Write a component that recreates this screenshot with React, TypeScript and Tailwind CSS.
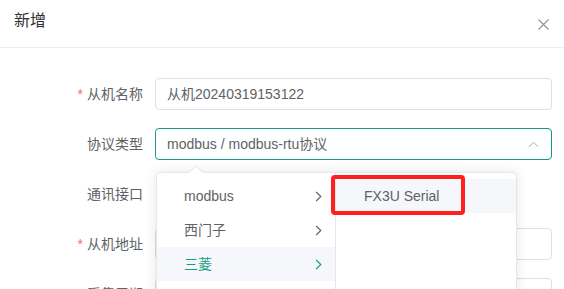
import React from "react";

function ChevronRight({ color }: { color: string }) {
  return (
    <svg width="7" height="11" viewBox="0 0 7 11" fill="none">
      <path d="M1.2 1 L5.8 5.5 L1.2 10" stroke={color} strokeWidth="1.1" />
    </svg>
  );
}

export default function App() {
  return (
    <div className="w-[564px] h-[289px] overflow-hidden bg-white font-['Liberation_Sans','Noto_Sans_CJK_SC',sans-serif]">
      <div className="h-[48px] border-b border-[#ebeef5] flex items-start justify-between pl-[14px] pr-[15px]">
        <div className="pt-[11px] text-[16px] leading-[20px] text-[#303133]">新增</div>
        <svg className="mt-[19px]" width="11" height="11" viewBox="0 0 11 11" fill="none">
          <path d="M0.5 0.5 L10.5 10.5 M10.5 0.5 L0.5 10.5" stroke="#909399" strokeWidth="1.1" />
        </svg>
      </div>
      <div className="pt-[30px]">
        <div className="flex items-center h-[32px] mb-[18px]">
          <div className="w-[155px] pr-[12px] text-right text-[14px] text-[#606266]">
            <span className="text-[#f56c6c] mr-[4px]">*</span>从机名称
          </div>
          <div className="w-[397px] h-[32px] border border-[#dcdfe6] rounded-[4px] px-[11px] flex items-center text-[14px] text-[#606266]">
            从机20240319153122
          </div>
        </div>
        <div className="flex items-center h-[32px] mb-[18px]">
          <div className="w-[155px] pr-[12px] text-right text-[14px] text-[#606266]">协议类型</div>
          <div className="relative w-[397px] h-[32px] border border-[#129c87] rounded-[4px] pl-[11px] pr-[12px] flex items-center justify-between text-[14px] text-[#606266]">
            <span>modbus / modbus-rtu协议</span>
            <svg width="11" height="7" viewBox="0 0 11 7" fill="none">
              <path d="M0.8 6 L5.5 1.2 L10.2 6" stroke="#a8abb2" strokeWidth="1" />
            </svg>
            <div className="absolute left-0 top-[43px] z-10 w-[361px] h-[204px] bg-white border border-[#e4e7ed] rounded-[4px] shadow-[0_0_12px_rgba(0,0,0,0.10)] flex">
              <div className="absolute left-[34px] top-[-6px] w-[10px] h-[10px] rotate-45 bg-white border-l border-t border-[#e4e7ed]" />
              <div className="w-[179px] border-r border-[#e4e7ed] pt-[6px] text-[14px]">
                <div className="h-[34px] flex items-center justify-between pl-[27px] pr-[13px] text-[#606266]">
                  <span>modbus</span>
                  <ChevronRight color="#606266" />
                </div>
                <div className="h-[34px] flex items-center justify-between pl-[27px] pr-[13px] text-[#606266]">
                  <span>西门子</span>
                  <ChevronRight color="#606266" />
                </div>
                <div className="h-[34px] flex items-center justify-between pl-[27px] pr-[13px] bg-[#f5f7fa] text-[#129c87]">
                  <span>三菱</span>
                  <ChevronRight color="#129c87" />
                </div>
              </div>
              <div className="flex-1 pt-[6px] text-[14px]">
                <div className="relative h-[34px] flex items-center pl-[28px] bg-[#f5f7fa] text-[#606266]">
                  <span>FX3U Serial</span>
                  <div className="absolute left-[-5px] top-[-4px] w-[134px] h-[40px] border-[4px] border-[#ff1f1f] rounded-[4px]" />
                </div>
              </div>
            </div>
          </div>
        </div>
        <div className="flex items-center h-[32px] mb-[18px]">
          <div className="w-[155px] pr-[12px] text-right text-[14px] text-[#606266]">通讯接口</div>
        </div>
        <div className="flex items-center h-[32px] mb-[18px]">
          <div className="w-[155px] pr-[12px] text-right text-[14px] text-[#606266]">
            <span className="text-[#f56c6c] mr-[4px]">*</span>从机地址
          </div>
          <div className="w-[397px] h-[32px] border border-[#dcdfe6] rounded-[4px]" />
        </div>
        <div className="flex items-center h-[32px] mb-[18px]">
          <div className="w-[155px] pr-[12px] text-right text-[14px] text-[#606266]">采集周期</div>
          <div className="w-[397px] h-[32px] border border-[#dcdfe6] rounded-[4px]" />
        </div>
      </div>
    </div>
  );
}
